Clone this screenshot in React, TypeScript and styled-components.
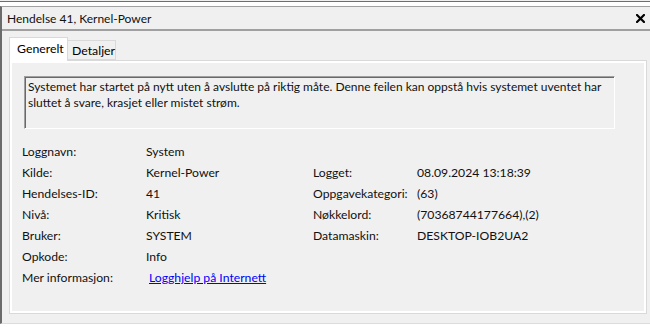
import styled, { createGlobalStyle } from "styled-components";

const Global = createGlobalStyle`
  html, body {
    margin: 0;
    padding: 0;
    background: #ffffff;
    font-family: "Lato", "Noto Sans", sans-serif;
    font-size: 12px;
    color: #000;
  }
`;

const Screen = styled.div`
  width: 650px;
  height: 327px;
  overflow: hidden;
  background: #ffffff;
`;

const TopEdge = styled.div`
  height: 4px;
  margin-top: 1px;
  background: #ffffff;
  border-top: 1px solid #6e6e6e;
  box-shadow: 0 -1px 0 #f0f0f0;
`;

const Frame = styled.div`
  height: 318px;
  box-sizing: border-box;
  background: #f0f0f0;
  border-top: 1px solid #a0a0a0;
  border-left: 2px solid #6b6b6b;
  border-bottom: 1px solid #dcdcdc;
  display: flex;
  flex-direction: column;
`;

const TitleBar = styled.div`
  height: 22px;
  display: flex;
  align-items: center;
  justify-content: space-between;
  padding: 0 5px 0 5px;
  border-bottom: 2px solid #a0a0a0;
`;

const Title = styled.span`
  font-size: 12px;
  color: #111;
`;

const CloseBtn = styled.div`
  width: 9px;
  height: 9px;
  display: flex;
  margin-top: 1px;
`;

const TabStrip = styled.div`
  display: flex;
  align-items: flex-end;
  margin: 6px 0 0 7px;
  height: 23px;
  position: relative;
  z-index: 1;
`;

const Tab = styled.div<{ $active?: boolean; $width: number }>`
  box-sizing: border-box;
  width: ${(p) => p.$width}px;
  height: ${(p) => (p.$active ? "24px" : "20px")};
  padding: ${(p) => (p.$active ? "0 0 2px 7px" : "0 0 0 4px")};
  margin-bottom: ${(p) => (p.$active ? "-1px" : "0")};
  background: ${(p) => (p.$active ? "#ffffff" : "#f0f0f0")};
  border: 1px solid #d9d9d9;
  border-bottom: ${(p) => (p.$active ? "none" : "1px solid #d9d9d9")};
  border-left: ${(p) => (p.$active ? "1px solid #d9d9d9" : "none")};
  display: flex;
  align-items: center;
  font-size: 12.3px;
`;

const Panel = styled.div`
  box-sizing: border-box;
  margin-left: 7px;
  width: 638px;
  height: 254px;
  border: 1px solid #d9d9d9;
  box-shadow: inset 0 0 0 2px #ffffff;
  padding: 15px 2px 0 2px;
`;

const Description = styled.div`
  box-sizing: border-box;
  margin-left: 12px;
  width: 591px;
  height: 53px;
  border-top: 1px solid #a0a0a0;
  border-left: 1px solid #a0a0a0;
  border-right: 1px solid #ffffff;
  border-bottom: 1px solid #ffffff;
  box-shadow: inset 1px 1px 0 #696969;
  padding: 2px 4px 0 3px;
  line-height: 16px;
  font-size: 12px;
  color: #111;
  white-space: nowrap;
`;

const Info = styled.div`
  margin: 12px 0 0 10px;
  display: grid;
  grid-template-columns: 124px 167px 104px 1fr;
  grid-auto-rows: 21px;
  align-items: center;
  font-size: 12.2px;
  color: #111;
`;

const Cell = styled.div`
  white-space: nowrap;
`;

const Link = styled.a`
  margin-left: 3px;
  color: #0000ff;
  text-decoration: underline;
  white-space: nowrap;
`;

const rows: [string, string, string, string][] = [
  ["Loggnavn:", "System", "", ""],
  ["Kilde:", "Kernel-Power", "Logget:", "08.09.2024 13:18:39"],
  ["Hendelses-ID:", "41", "Oppgavekategori:", "(63)"],
  ["Nivå:", "Kritisk", "Nøkkelord:", "(70368744177664),(2)"],
  ["Bruker:", "SYSTEM", "Datamaskin:", "DESKTOP-IOB2UA2"],
  ["Opkode:", "Info", "", ""],
];

function App() {
  return (
    <Screen>
      <Global />
      <TopEdge />
      <Frame>
        <TitleBar>
          <Title>Hendelse 41, Kernel-Power</Title>
          <CloseBtn>
            <svg width="9" height="9" viewBox="0 0 9 9">
              <path d="M1 1 L8 8 M8 1 L1 8" stroke="#000" strokeWidth="2.2" strokeLinecap="square" />
            </svg>
          </CloseBtn>
        </TitleBar>
        <TabStrip>
          <Tab $active $width={59}>
            Generelt
          </Tab>
          <Tab $width={48}>Detaljer</Tab>
        </TabStrip>
        <Panel>
          <Description>
            Systemet har startet på nytt uten å avslutte på riktig måte. Denne feilen kan oppstå hvis systemet uventet har
            <br />
            sluttet å svare, krasjet eller mistet strøm.
          </Description>
          <Info>
            {rows.map((r) => (
              <>
                <Cell key={r[0]}>{r[0]}</Cell>
                <Cell>{r[1]}</Cell>
                <Cell>{r[2]}</Cell>
                <Cell>{r[3]}</Cell>
              </>
            ))}
            <Cell>Mer informasjon:</Cell>
            <Cell>
              <Link href="#">Logghjelp på Internett</Link>
            </Cell>
          </Info>
        </Panel>
      </Frame>
    </Screen>
  );
}

export default App;
